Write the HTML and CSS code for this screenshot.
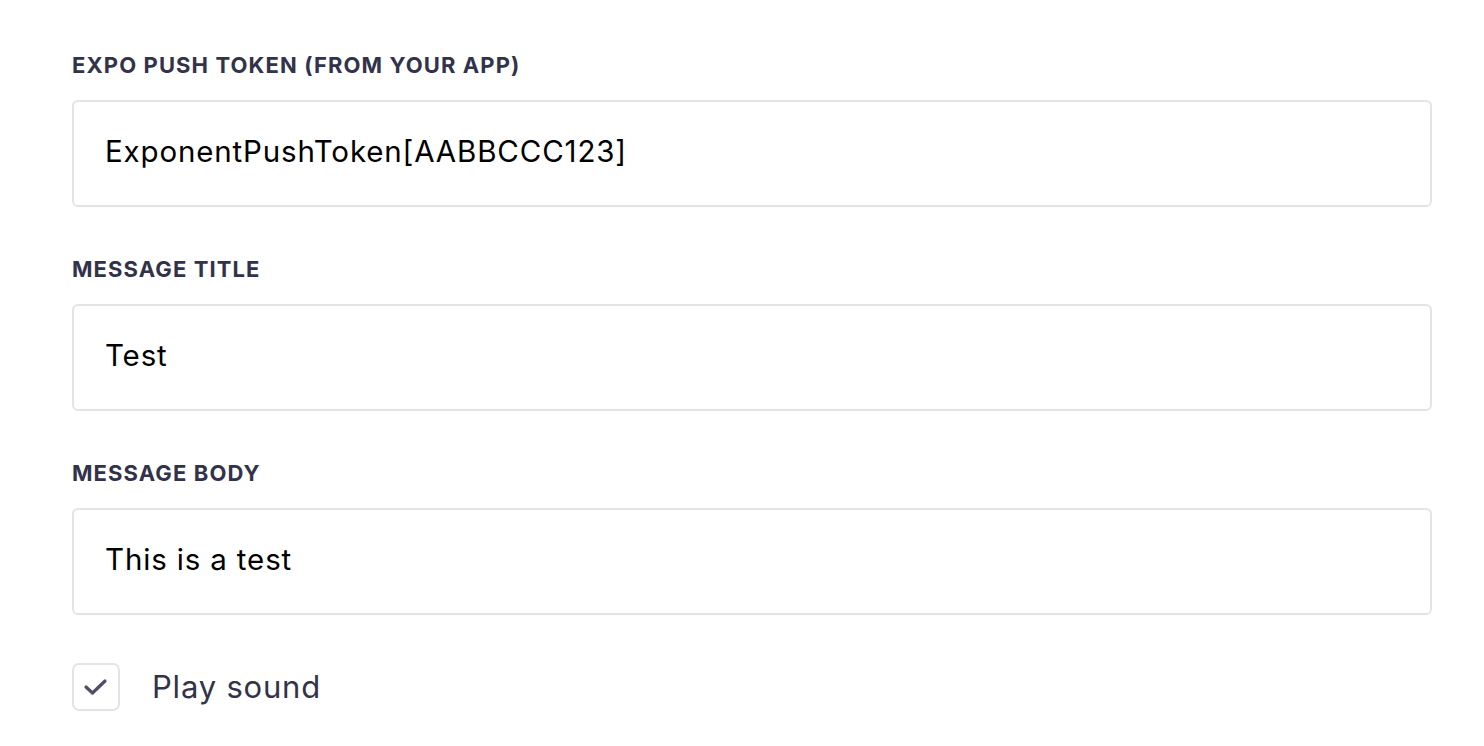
FILE: index.html
```html
<!DOCTYPE html>
<html>
<head>
<meta charset="utf-8">
<link rel="stylesheet" href="styles.css">
</head>
<body>
<form class="form">
  <div class="field">
    <label class="label">EXPO PUSH TOKEN (FROM YOUR APP)</label>
    <div class="input">ExponentPushToken[AABBCCC123]</div>
  </div>
  <div class="field">
    <label class="label">MESSAGE TITLE</label>
    <div class="input">Test</div>
  </div>
  <div class="field">
    <label class="label">MESSAGE BODY</label>
    <div class="input">This is a test</div>
  </div>
  <div class="check-row">
    <span class="checkbox">
      <svg width="26" height="20" viewBox="0 0 26 20"><path d="M3 10 L9.5 16 L22 4" fill="none" stroke="#4e4e66" stroke-width="3.2" stroke-linecap="round" stroke-linejoin="round"/></svg>
    </span>
    <span class="check-label">Play sound</span>
  </div>
</form>
</body>
</html>
```

FILE: styles.css
```css
html, body {
  margin: 0;
  padding: 0;
  background: #ffffff;
}
.form {
  padding: 51px 52px 0 72px;
  width: 1360px;
}
.field {
  margin-bottom: 48px;
}
.label {
  display: block;
  font-family: Inter, "Noto Sans", sans-serif;
  font-weight: 700;
  font-size: 22px;
  line-height: 28px;
  letter-spacing: 1.1px;
  color: #32324a;
  margin-bottom: 21px;
}
.input {
  box-sizing: border-box;
  height: 107px;
  border: 2px solid #e4e4e6;
  border-radius: 6px;
  padding: 0 31px;
  display: flex;
  align-items: center;
  padding-bottom: 6px;
  font-family: Inter, "Noto Sans", sans-serif;
  font-size: 29.5px;
  letter-spacing: 0.85px;
  color: #000000;
}
.check-row {
  display: flex;
  align-items: center;
  margin-top: 1px;
}
.checkbox {
  box-sizing: border-box;
  width: 48px;
  height: 48px;
  border: 2px solid #e4e4e6;
  border-radius: 7px;
  display: flex;
  align-items: center;
  justify-content: center;
}
.check-label {
  margin-left: 32px;
  font-family: Inter, "Noto Sans", sans-serif;
  font-size: 31px;
  letter-spacing: 0.8px;
  color: #32324a;
  padding-bottom: 2px;
}
```
